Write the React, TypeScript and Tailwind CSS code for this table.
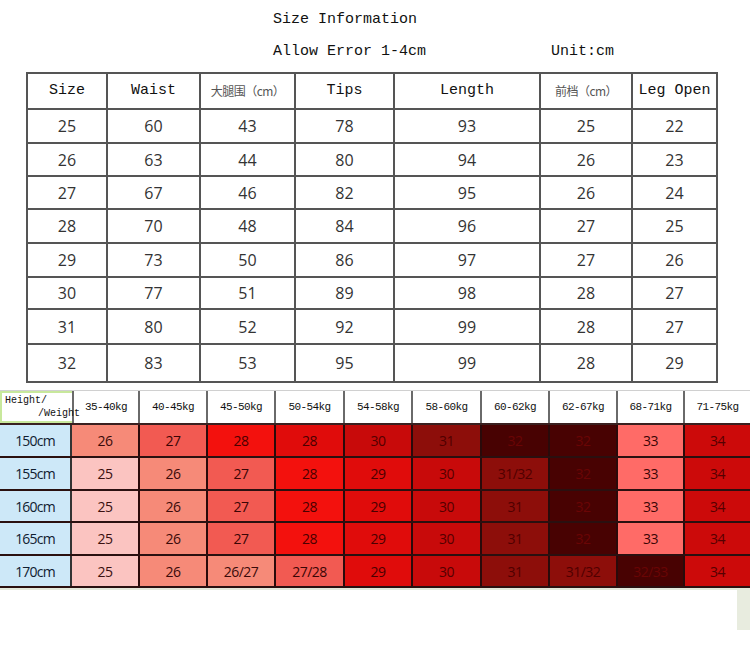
const sizeCols = [
  { label: "Size", w: "w-[80px]" },
  { label: "Waist", w: "w-[93px]" },
  { label: "大腿围（cm）", w: "w-[95px]", cjk: true },
  { label: "Tips", w: "w-[99px]" },
  { label: "Length", w: "w-[146px]" },
  { label: "前档（cm）", w: "w-[92px]", cjk: true },
  { label: "Leg Open", w: "w-[85px]" },
];

const sizeRows: { h: string; v: string[] }[] = [
  { h: "h-[34px]", v: ["25", "60", "43", "78", "93", "25", "22"] },
  { h: "h-[33px]", v: ["26", "63", "44", "80", "94", "26", "23"] },
  { h: "h-[33px]", v: ["27", "67", "46", "82", "95", "26", "24"] },
  { h: "h-[34px]", v: ["28", "70", "48", "84", "96", "27", "25"] },
  { h: "h-[34px]", v: ["29", "73", "50", "86", "97", "27", "26"] },
  { h: "h-[32px]", v: ["30", "77", "51", "89", "98", "28", "27"] },
  { h: "h-[35px]", v: ["31", "80", "52", "92", "99", "28", "27"] },
  { h: "h-[38px]", v: ["32", "83", "53", "95", "99", "28", "29"] },
];

const weights = [
  "35-40kg", "40-45kg", "45-50kg", "50-54kg", "54-58kg",
  "58-60kg", "60-62kg", "62-67kg", "68-71kg", "71-75kg",
];

// background / text pairs
const C = {
  pink: "bg-[#fbc4c1] text-[#3a1010]",
  salmon: "bg-[#f68a78] text-[#3a0a0a]",
  coral: "bg-[#f25a52] text-[#3a0505]",
  bright: "bg-[#f3110d] text-[#4a0000]",
  red: "bg-[#e00c0b] text-[#4a0000]",
  deep: "bg-[#c80a0a] text-[#550000]",
  maroon: "bg-[#8d0e0a] text-[#500000]",
  dark: "bg-[#480202] text-[#6a0505]",
  rose: "bg-[#ff6b67] text-[#3a0505]",
  last: "bg-[#cc0a0a] text-[#550000]",
};

const heightRows: { label: string; h: string; cells: [string, string][] }[] = [
  {
    label: "150cm",
    h: "h-[33px]",
    cells: [
      ["26", C.salmon], ["27", C.coral], ["28", C.bright], ["28", C.red], ["30", C.deep],
      ["31", C.maroon], ["32", C.dark], ["32", C.dark], ["33", C.rose], ["34", C.last],
    ],
  },
  {
    label: "155cm",
    h: "h-[33px]",
    cells: [
      ["25", C.pink], ["26", C.salmon], ["27", C.coral], ["28", C.bright], ["29", C.red],
      ["30", C.deep], ["31/32", C.maroon], ["32", C.dark], ["33", C.rose], ["34", C.last],
    ],
  },
  {
    label: "160cm",
    h: "h-[32px]",
    cells: [
      ["25", C.pink], ["26", C.salmon], ["27", C.coral], ["28", C.bright], ["29", C.red],
      ["30", C.deep], ["31", C.maroon], ["32", C.dark], ["33", C.rose], ["34", C.last],
    ],
  },
  {
    label: "165cm",
    h: "h-[33px]",
    cells: [
      ["25", C.pink], ["26", C.salmon], ["27", C.coral], ["28", C.bright], ["29", C.red],
      ["30", C.deep], ["31", C.maroon], ["32", C.dark], ["33", C.rose], ["34", C.last],
    ],
  },
  {
    label: "170cm",
    h: "h-[32px]",
    cells: [
      ["25", C.pink], ["26", C.salmon], ["26/27", C.salmon], ["27/28", C.coral], ["29", C.red],
      ["30", C.deep], ["31", C.maroon], ["31/32", C.maroon], ["32/33", C.dark], ["34", C.last],
    ],
  },
];

const grid =
  "grid grid-cols-[72px_68px_68px_68px_69px_68px_69px_68px_68px_67px_65px]";

export default function App() {
  return (
    <div className="w-[750px] h-[652px] bg-white overflow-hidden relative">
      {/* heading */}
      <div className="pl-[273px] pt-[10px] font-['Liberation_Mono',monospace] text-[15px] leading-[20px] text-[#111]">
        <p>Size Information</p>
        <div className="flex mt-[12px]">
          <span className="w-[278px]">Allow Error 1-4cm</span>
          <span>Unit:cm</span>
        </div>
      </div>

      {/* size chart */}
      <table className="ml-[26px] mt-[10px] border-collapse border-2 border-[#555] text-[#333]">
        <thead>
          <tr className="h-[36px]">
            {sizeCols.map((c) => (
              <th
                key={c.label}
                className={`${c.w} border-2 border-[#555] font-normal ${
                  c.cjk
                    ? "font-['Noto_Sans_CJK_SC',sans-serif] text-[12px] font-medium text-[#555] tracking-[-0.5px]"
                    : "font-['Liberation_Mono',monospace] text-[15px] text-[#111]"
                }`}
              >
                {c.label}
              </th>
            ))}
          </tr>
        </thead>
        <tbody>
          {sizeRows.map((r, i) => (
            <tr key={i} className={r.h}>
              {r.v.map((v, j) => (
                <td
                  key={j}
                  className="border-2 border-[#555] text-center font-['Open_Sans',sans-serif] text-[16px] leading-none"
                >
                  {v}
                </td>
              ))}
            </tr>
          ))}
        </tbody>
      </table>

      {/* height / weight chart */}
      <div className="mt-[7px] border-t border-[#d0d0d0]">
        <div className={`${grid} h-[34px] border-b-2 border-[#3a2020]`}>
          <div className="relative bg-white border-2 border-r-0 border-[#c8e89c] font-['Liberation_Mono',monospace] text-[10px] leading-none text-[#111]">
            <span className="absolute left-[3px] top-[3px]">Height/</span>
            <span className="absolute left-[36px] top-[16px] whitespace-nowrap">/Weight</span>
          </div>
          {weights.map((w, i) => (
            <div
              key={w}
              className={`flex items-center justify-center bg-white font-['Liberation_Mono',monospace] text-[11px] tracking-[-0.6px] text-[#111] ${
                i < weights.length - 1 ? "border-r-2 border-[#6a6a6a]" : ""
              } ${i === 0 ? "border-l-2 border-[#6a6a6a]" : ""}`}
            >
              {w}
            </div>
          ))}
        </div>
        {heightRows.map((r) => (
          <div key={r.label} className={`${grid} ${r.h} border-b-2 border-[#2a1010]`}>
            <div className="flex items-center justify-center bg-[#cde8f8] border-r-2 border-[#333] font-['Open_Sans',sans-serif] text-[14px] font-medium tracking-[-0.8px] text-[#102030]">
              {r.label}
            </div>
            {r.cells.map(([v, cls], i) => (
              <div
                key={i}
                className={`flex items-center justify-center ${cls} font-['Open_Sans',sans-serif] text-[14px] font-medium tracking-[-0.5px] ${
                  i < r.cells.length - 1 ? "border-r-2 border-[#2a0a0a]" : ""
                }`}
              >
                {v}
              </div>
            ))}
          </div>
        ))}
        <div className="flex justify-end border-t-2 border-[#e4e9dc]">
          <div className="w-[13px] h-[40px] bg-[#e8ecdf]" />
        </div>
      </div>
    </div>
  );
}
